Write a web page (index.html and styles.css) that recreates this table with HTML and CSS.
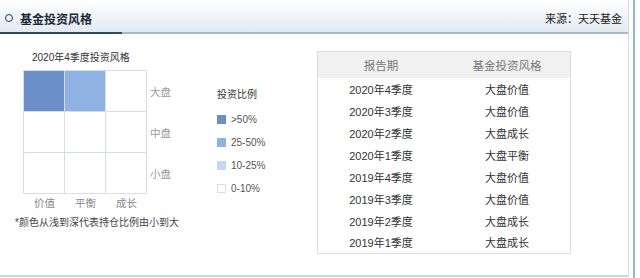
FILE: index.html
```html
<!DOCTYPE html>
<html lang="zh-CN">
<head>
<meta charset="utf-8">
<title>基金投资风格</title>
<link rel="stylesheet" href="styles.css">
</head>
<body>
<div class="frame">
  <div class="panel">
    <div class="panel-head">
      <div class="head-title">
        <span class="ring"></span>
        <span class="head-text">基金投资风格</span>
      </div>
      <div class="source">来源：天天基金</div>
    </div>
    <div class="panel-body">
      <div class="chart-col">
        <div class="chart-title">2020年4季度投资风格</div>
        <div class="chart-row">
          <div class="grid">
            <div class="cell c-dark"></div>
            <div class="cell c-mid"></div>
            <div class="cell"></div>
            <div class="cell"></div>
            <div class="cell"></div>
            <div class="cell"></div>
            <div class="cell"></div>
            <div class="cell"></div>
            <div class="cell"></div>
          </div>
          <div class="ylabels">
            <div class="ylabel">大盘</div>
            <div class="ylabel">中盘</div>
            <div class="ylabel">小盘</div>
          </div>
        </div>
        <div class="xlabels">
          <div class="xlabel">价值</div>
          <div class="xlabel">平衡</div>
          <div class="xlabel">成长</div>
        </div>
        <div class="footnote">*颜色从浅到深代表持仓比例由小到大</div>
      </div>
      <div class="legend">
        <div class="legend-title">投资比例</div>
        <div class="legend-item"><span class="swatch c-dark"></span><span>&gt;50%</span></div>
        <div class="legend-item"><span class="swatch c-mid"></span><span>25-50%</span></div>
        <div class="legend-item"><span class="swatch c-light"></span><span>10-25%</span></div>
        <div class="legend-item"><span class="swatch c-none"></span><span>0-10%</span></div>
      </div>
      <table class="history">
        <thead>
          <tr><th>报告期</th><th>基金投资风格</th></tr>
        </thead>
        <tbody>
          <tr><td>2020年4季度</td><td>大盘价值</td></tr>
          <tr><td>2020年3季度</td><td>大盘价值</td></tr>
          <tr><td>2020年2季度</td><td>大盘成长</td></tr>
          <tr><td>2020年1季度</td><td>大盘平衡</td></tr>
          <tr><td>2019年4季度</td><td>大盘价值</td></tr>
          <tr><td>2019年3季度</td><td>大盘价值</td></tr>
          <tr><td>2019年2季度</td><td>大盘成长</td></tr>
          <tr><td>2019年1季度</td><td>大盘成长</td></tr>
        </tbody>
      </table>
    </div>
  </div>
  <div class="edge"></div>
</div>
</body>
</html>
```

FILE: styles.css
```css
* { box-sizing: border-box; }
html, body {
  margin: 0;
  padding: 0;
  background: #ffffff;
}
body {
  font-family: "Liberation Sans", "Noto Sans CJK SC", sans-serif;
  font-size: 11px;
  color: #333333;
}
.frame {
  display: flex;
  width: 640px;
  height: 278px;
}
.panel {
  width: 629px;
  height: 277px;
  border-right: 1px solid #d3dbe3;
  border-bottom: 2px solid #c9d6df;
  display: flex;
  flex-direction: column;
}
.edge {
  width: 2px;
  height: 278px;
  margin-left: 4px;
  background: #93b2d9;
}
.panel-head {
  height: 34px;
  display: flex;
  align-items: stretch;
  justify-content: space-between;
  background: linear-gradient(#ffffff 0%, #f3f6fa 40%, #e2e9f1 100%);
  border-bottom: 2px solid #a7b9c9;
}
.head-title {
  display: flex;
  align-items: center;
  gap: 7px;
  width: 122px;
  padding: 4px 0 0 5px;
  margin-bottom: -2px;
  border-bottom: 2px solid #2b4b66;
}
.ring {
  width: 8px;
  height: 8px;
  border: 1.6px solid #1f3c58;
  border-radius: 50%;
}
.head-text {
  font-size: 12px;
  font-weight: bold;
  color: #1b2937;
}
.source {
  display: flex;
  align-items: center;
  padding: 4px 6px 0 0;
  font-size: 11px;
  color: #222222;
}
.panel-body {
  flex: 1;
  display: flex;
  align-items: flex-start;
}
.chart-col {
  width: 217px;
  padding: 17px 0 0 15px;
}
.chart-title {
  font-size: 10px;
  line-height: 14px;
  color: #333333;
  margin: 0 0 5px 17px;
}
.chart-row {
  display: flex;
  margin-left: 8px;
}
.grid {
  display: grid;
  grid-template-columns: repeat(3, 40px);
  grid-auto-rows: 40px;
  gap: 1px;
  background: #d6dde9;
  border: 1px solid #d6dde9;
}
.cell { background: #ffffff; }
.c-dark { background: #6c8fca; }
.c-mid { background: #8fb2e2; }
.c-light { background: #c6d8f1; }
.c-none { background: #ffffff; border: 1px solid #dddddd; }
.ylabels {
  display: flex;
  flex-direction: column;
  margin-left: 3px;
}
.ylabel {
  height: 41px;
  display: flex;
  align-items: center;
  padding-top: 2px;
  font-size: 10.5px;
  color: #999999;
}
.xlabels {
  display: flex;
  margin: 2px 0 0 9px;
}
.xlabel {
  width: 41px;
  text-align: center;
  font-size: 10.5px;
  line-height: 14px;
  color: #888888;
}
.footnote {
  margin-top: 6px;
  font-size: 10px;
  line-height: 14px;
  color: #444444;
  white-space: nowrap;
}
.legend {
  width: 100px;
  padding-top: 54px;
}
.legend-title {
  font-size: 10px;
  line-height: 14px;
  color: #333333;
  margin-bottom: 6px;
}
.legend-item {
  height: 23px;
  display: flex;
  align-items: center;
  gap: 5px;
  font-size: 10px;
  color: #555555;
}
.swatch {
  width: 9px;
  height: 9px;
  display: inline-block;
}
.history {
  margin-top: 17px;
  width: 254px;
  border-collapse: collapse;
  border: 1px solid #dddddd;
  table-layout: fixed;
}
.history th {
  height: 26px;
  background: #f1f1f1;
  font-weight: normal;
  font-size: 11.5px;
  color: #777777;
  text-align: center;
  padding: 0;
}
.history td {
  height: 22px;
  font-size: 11px;
  color: #333333;
  text-align: center;
  padding: 0;
}
```
